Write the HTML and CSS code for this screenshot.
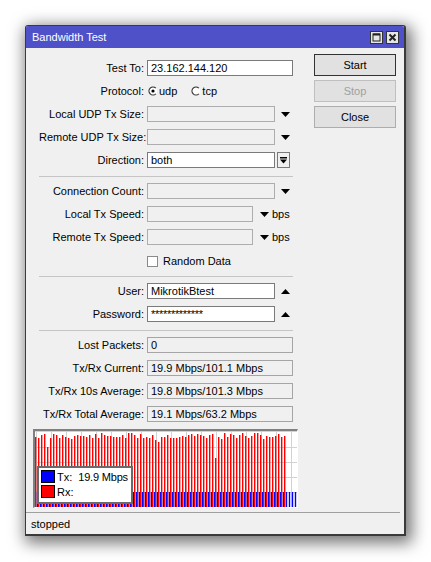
FILE: index.html
```html
<!DOCTYPE html>
<html>
<head>
<meta charset="utf-8">
<title>Bandwidth Test</title>
<link rel="stylesheet" href="styles.css">
</head>
<body>
<div class="window">
  <div class="titlebar">
    <span class="title">Bandwidth Test</span>
    <div class="tbtns">
      <span class="tbtn"><svg width="11" height="11" viewBox="0 0 11 11"><rect x="2" y="2" width="7" height="7" fill="none" stroke="#222" stroke-width="1"/><rect x="2" y="1.5" width="7" height="2" fill="#222"/></svg></span>
      <span class="tbtn"><svg width="11" height="11" viewBox="0 0 11 11"><path d="M2.5 2.5 L8.5 8.5 M8.5 2.5 L2.5 8.5" stroke="#222" stroke-width="2" fill="none"/></svg></span>
    </div>
  </div>
  <div class="content">
    <div class="leftcol">
      <div class="form">
        <div class="group">
          <div class="row"><span class="lbl">Test To:</span><div class="fld"><div class="input w-full">23.162.144.120</div></div></div>
          <div class="row"><span class="lbl">Protocol:</span><div class="fld">
            <span class="radio"><svg width="10" height="10" viewBox="0 0 10 10"><circle cx="5" cy="5" r="4" fill="#fff"/><path d="M7.83 2.17 A4 4 0 1 0 7.83 7.83" fill="none" stroke="#333" stroke-width="1.2"/><circle cx="5" cy="5" r="1.6" fill="#000"/></svg><span>udp</span></span>
            <span class="radio r2"><svg width="10" height="10" viewBox="0 0 10 10"><circle cx="5" cy="5" r="4" fill="#fff"/><path d="M7.83 2.17 A4 4 0 1 0 7.83 7.83" fill="none" stroke="#333" stroke-width="1.2"/></svg><span>tcp</span></span>
          </div></div>
          <div class="row"><span class="lbl">Local UDP Tx Size:</span><div class="fld"><div class="input dis w-dd"></div><svg class="arr" width="9" height="5" viewBox="0 0 9 5"><polygon points="0,0 9,0 4.5,5" fill="#000"/></svg></div></div>
          <div class="row"><span class="lbl">Remote UDP Tx Size:</span><div class="fld"><div class="input dis w-dd"></div><svg class="arr" width="9" height="5" viewBox="0 0 9 5"><polygon points="0,0 9,0 4.5,5" fill="#000"/></svg></div></div>
          <div class="row"><span class="lbl">Direction:</span><div class="fld"><div class="input w-dd">both</div><span class="ddbtn"><svg width="7" height="7" viewBox="0 0 7 7"><rect x="0" y="0" width="7" height="1.5" fill="#000"/><polygon points="0,2.5 7,2.5 3.5,6.5" fill="#000"/></svg></span></div></div>
        </div>
        <div class="sep"></div>
        <div class="group">
          <div class="row"><span class="lbl">Connection Count:</span><div class="fld"><div class="input dis w-dd"></div><svg class="arr" width="9" height="5" viewBox="0 0 9 5"><polygon points="0,0 9,0 4.5,5" fill="#000"/></svg></div></div>
          <div class="row"><span class="lbl">Local Tx Speed:</span><div class="fld"><div class="input dis w-sp"></div><svg class="arr sp" width="9" height="5" viewBox="0 0 9 5"><polygon points="0,0 9,0 4.5,5" fill="#000"/></svg><span class="unit">bps</span></div></div>
          <div class="row"><span class="lbl">Remote Tx Speed:</span><div class="fld"><div class="input dis w-sp"></div><svg class="arr sp" width="9" height="5" viewBox="0 0 9 5"><polygon points="0,0 9,0 4.5,5" fill="#000"/></svg><span class="unit">bps</span></div></div>
          <div class="row chk"><span class="lbl"></span><div class="fld"><span class="checkbox"></span><span class="chklbl">Random Data</span></div></div>
        </div>
        <div class="sep tight"></div>
        <div class="group">
          <div class="row"><span class="lbl">User:</span><div class="fld"><div class="input w-dd">MikrotikBtest</div><svg class="arr" width="9" height="5" viewBox="0 0 9 5"><polygon points="0,5 9,5 4.5,0" fill="#000"/></svg></div></div>
          <div class="row"><span class="lbl">Password:</span><div class="fld"><div class="input w-dd pw">*************</div><svg class="arr" width="9" height="5" viewBox="0 0 9 5"><polygon points="0,5 9,5 4.5,0" fill="#000"/></svg></div></div>
        </div>
        <div class="sep"></div>
        <div class="group">
          <div class="row"><span class="lbl">Lost Packets:</span><div class="fld"><div class="input ro w-full">0</div></div></div>
          <div class="row"><span class="lbl">Tx/Rx Current:</span><div class="fld"><div class="input ro w-full">19.9 Mbps/101.1 Mbps</div></div></div>
          <div class="row"><span class="lbl">Tx/Rx 10s Average:</span><div class="fld"><div class="input ro w-full">19.8 Mbps/101.3 Mbps</div></div></div>
          <div class="row"><span class="lbl">Tx/Rx Total Average:</span><div class="fld"><div class="input ro w-full">19.1 Mbps/63.2 Mbps</div></div></div>
        </div>
      </div>
      <div class="graph">
        <svg class="chart" width="262" height="76" viewBox="0 0 262 76">
          <g fill="#d2d2d2">
            <rect x="0" y="0" width="262" height="1"/>
            <rect x="0" y="16" width="262" height="1"/>
            <rect x="0" y="31" width="262" height="1"/>
            <rect x="0" y="46" width="262" height="1"/>
            <rect x="0" y="61" width="262" height="1"/>
            <rect x="1" y="0" width="1" height="76"/>
            <rect x="16" y="0" width="1" height="76"/>
            <rect x="31" y="0" width="1" height="76"/>
            <rect x="46" y="0" width="1" height="76"/>
            <rect x="61" y="0" width="1" height="76"/>
            <rect x="76" y="0" width="1" height="76"/>
            <rect x="91" y="0" width="1" height="76"/>
            <rect x="106" y="0" width="1" height="76"/>
            <rect x="121" y="0" width="1" height="76"/>
            <rect x="136" y="0" width="1" height="76"/>
            <rect x="151" y="0" width="1" height="76"/>
            <rect x="166" y="0" width="1" height="76"/>
            <rect x="181" y="0" width="1" height="76"/>
            <rect x="196" y="0" width="1" height="76"/>
            <rect x="211" y="0" width="1" height="76"/>
            <rect x="226" y="0" width="1" height="76"/>
            <rect x="241" y="0" width="1" height="76"/>
            <rect x="256" y="0" width="1" height="76"/>
          </g>
          <g id="bars"></g>
        </svg>
        <div class="legend">
          <div class="lrow"><span class="sw tx"></span><span class="ltxt">Tx:<span class="lval">19.9 Mbps</span></span></div>
          <div class="lrow"><span class="sw rx"></span><span class="ltxt">Rx:</span></div>
        </div>
      </div>
    </div>
    <div class="rightcol">
      <button class="btn default">Start</button>
      <button class="btn disabled">Stop</button>
      <button class="btn">Close</button>
    </div>
  </div>
  <div class="status"><span>stopped</span></div>
</div>
<script src="script.js"></script>
</body>
</html>
```

FILE: styles.css
```css
* { box-sizing: border-box; }
html, body { margin: 0; padding: 0; background: #fff; }
html { height: 100%; }
body {
  min-height: 100%;
  padding: 25px 0 30px 25px;
  font-family: "Liberation Sans", Arial, sans-serif;
  font-size: 11px;
  color: #000;
}
.window {
  box-sizing: content-box;
  width: 378px;
  height: 508px;
  border: 1px solid #3a3a3a;
  border-right-width: 2px;
  border-bottom-width: 2px;
  border-radius: 3px 3px 0 0;
  background: #f0f0f0;
  box-shadow: 3px 4px 16px 3px rgba(0,0,0,0.55);
  display: flex;
  flex-direction: column;
}
.titlebar {
  height: 22px;
  flex: none;
  background: #4f51c9;
  display: flex;
  align-items: center;
  justify-content: space-between;
  padding: 0 5px 0 6px;
  border-radius: 2px 2px 0 0;
}
.title { color: #fff; font-size: 11px; }
.tbtns { display: flex; gap: 3px; }
.tbtn {
  width: 13px; height: 13px;
  border: 1px solid #333;
  background: #e6e6e6;
  display: flex; align-items: center; justify-content: center;
}
.tbtn svg { display: block; }
.content {
  flex: 1;
  display: flex;
  gap: 17px;
  padding: 6px 8px 0 7px;
}
.leftcol { width: 264px; padding-top: 6px; }
.rightcol { width: 82px; display: flex; flex-direction: column; gap: 4px; }
.form { margin: 0 4px 0 6px; }
.group { display: flex; flex-direction: column; gap: 7px; }
.row {
  display: grid;
  grid-template-columns: 105px 1fr;
  column-gap: 3px;
  height: 16px;
  align-items: center;
}
.row.chk { margin-top: 1px; }
.lbl { text-align: right; white-space: nowrap; line-height: 16px; }
.fld { display: flex; align-items: center; height: 16px; }
.input {
  height: 16px;
  border: 1px solid #7a7a7a;
  background: #fff;
  padding: 0 3px;
  line-height: 14px;
  white-space: nowrap;
  overflow: hidden;
}
.input.dis { background: #f0f0f0; border-color: #adadad; }
.input.ro { background: #f0f0f0; border-color: #a5a5a5; }
.input.pw { letter-spacing: -0.3px; }
.w-full { width: 146px; }
.w-dd { width: 128px; }
.w-sp { width: 106px; }
.arr { display: block; margin-left: 6px; }
.arr.sp { margin-left: 7px; }
.unit { margin-left: 3px; }
.ddbtn {
  width: 13px; height: 16px;
  margin-left: 2px;
  border: 1px solid #7a7a7a;
  background: #f0f0f0;
  display: flex; align-items: center; justify-content: center;
}
.ddbtn svg { display: block; }
.radio { display: inline-flex; align-items: center; }
.radio svg { display: block; margin-left: 1px; margin-right: 1px; }
.radio.r2 { margin-left: 13px; }
.checkbox {
  width: 11px; height: 11px;
  border: 1px solid #8a8a8a;
  background: #fff;
}
.chklbl { margin-left: 5px; }
.sep { height: 1px; background: #c5c5c5; margin: 8px 0 6px; }
.sep.tight { margin-top: 7px; }
.graph {
  position: relative;
  margin-top: 7px;
  width: 265px;
  height: 79px;
  border-top: 2px solid #808080;
  border-left: 2px solid #808080;
  border-right: 1px solid #fff;
  border-bottom: 1px solid #fff;
  background: #fff;
}
.chart { display: block; }
.legend {
  position: absolute;
  left: 2px;
  top: 35px;
  width: 96px;
  height: 38px;
  border: 2px solid #6a6a6a;
  background: #fff;
  padding: 2px 2px;
  display: flex;
  flex-direction: column;
  gap: 2px;
}
.lrow { display: flex; align-items: center; height: 13px; }
.sw { width: 14px; height: 13px; border: 1px solid #000; flex: none; }
.sw.tx { background: #0000ff; }
.sw.rx { background: #ff0000; }
.ltxt { margin-left: 2px; font-size: 11px; white-space: nowrap; }
.lval { margin-left: 6px; letter-spacing: -0.2px; }
.btn {
  width: 82px; height: 22px;
  border: 1px solid #adadad;
  background: #e1e1e1;
  font-family: "Liberation Sans", Arial, sans-serif;
  font-size: 11px;
  color: #000;
  padding: 0;
  margin: 0;
  border-radius: 0;
}
.btn.default { border-color: #333; }
.btn.disabled { color: #a0a0a0; border-color: #bfbfbf; }
.status {
  height: 22px;
  flex: none;
  margin-right: 4px;
  border-top: 1px solid #a0a0a0;
  display: flex;
  align-items: center;
  padding-left: 5px;
}
```

FILE: script.js
```js
(function () {
  var g = document.getElementById('bars');
  var seed = 11;
  function rnd() { seed = (seed * 9301 + 49297) % 233280; return seed / 233280; }
  var s = '';
  for (var k = 0; k < 87; k++) {
    var x = 3 * k;
    if (k < 84) {
      var t = 2 + Math.round(rnd() * 6);
      if (k === 4) t = 16;
      if (k === 40) t = 9;
      if (k === 41) t = 11;
      if (k === 60) t = 27;
      s += '<rect x="' + x + '" y="' + t + '" width="1.4" height="' + (76 - t) + '" fill="#ff0000"/>';
    }
    s += '<rect x="' + (x + 1.8) + '" y="61" width="1.4" height="15" fill="#0000ff"/>';
  }
  g.innerHTML = s;
})();
```
